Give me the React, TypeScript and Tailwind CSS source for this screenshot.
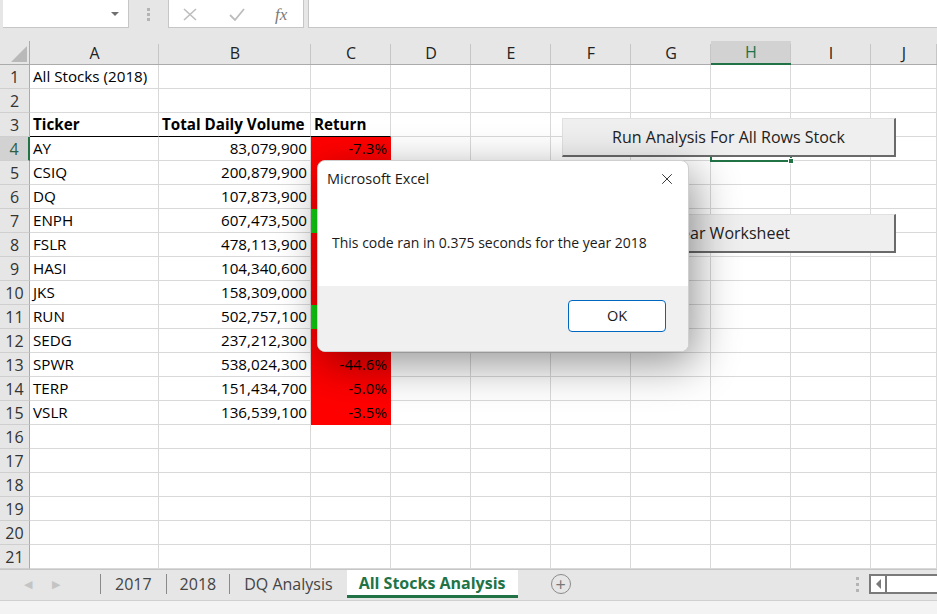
import { X } from "lucide-react";

const colWidths = [
  "w-[129px]",
  "w-[152px]",
  "w-[80px]",
  "w-[80px]",
  "w-[80px]",
  "w-[80px]",
  "w-[80px]",
  "w-[80px]",
  "w-[80px]",
  "w-[66px]",
];
const colNames = ["A", "B", "C", "D", "E", "F", "G", "H", "I", "J"];

const stocks = [
  ["AY", "83,079,900", "-7.3%"],
  ["CSIQ", "200,879,900", "-16.1%"],
  ["DQ", "107,873,900", "-62.6%"],
  ["ENPH", "607,473,500", "81.9%"],
  ["FSLR", "478,113,900", "-39.7%"],
  ["HASI", "104,340,600", "-25.5%"],
  ["JKS", "158,309,000", "-60.5%"],
  ["RUN", "502,757,100", "84.0%"],
  ["SEDG", "237,212,300", "-7.8%"],
  ["SPWR", "538,024,300", "-44.6%"],
  ["TERP", "151,434,700", "-5.0%"],
  ["VSLR", "136,539,100", "-3.5%"],
];

type Cell = { text?: string; bold?: boolean; right?: boolean; fill?: "red" | "green"; underline?: boolean };

function buildRow(r: number): Cell[] {
  const cells: Cell[] = Array.from({ length: 10 }, () => ({}));
  if (r === 1) cells[0] = { text: "All Stocks (2018)" };
  if (r === 3) {
    cells[0] = { text: "Ticker", bold: true, underline: true };
    cells[1] = { text: "Total Daily Volume", bold: true, underline: true };
    cells[2] = { text: "Return", bold: true, underline: true };
  }
  if (r >= 4 && r <= 15) {
    const [t, v, ret] = stocks[r - 4];
    cells[0] = { text: t };
    cells[1] = { text: v, right: true };
    cells[2] = { text: ret, right: true, fill: ret.startsWith("-") ? "red" : "green" };
  }
  return cells;
}

function GridCell({ cell, width }: { cell: Cell; width: string }) {
  const fill =
    cell.fill === "red"
      ? "bg-[#ff0000] border-[#ff0000]"
      : cell.fill === "green"
        ? "bg-[#11d011] border-[#11d011]"
        : "bg-white border-[#d9d9d9]";
  return (
    <div
      className={`${width} shrink-0 h-full border-r border-b ${fill} ${
        cell.underline ? "border-b-black" : ""
      } flex items-center overflow-visible whitespace-nowrap ${
        cell.right ? "justify-end pr-[3px]" : "pl-[3px]"
      } ${cell.bold ? "font-bold" : ""} text-[15.2px] text-black`}
    >
      {cell.text}
    </div>
  );
}

function FormulaBar() {
  return (
    <div className="h-[28px] flex items-stretch">
      <div className="ml-[3px] w-[126px] bg-white border-r border-b border-[#c6c6c6] flex items-center justify-end pr-[9px]">
        <div className="w-0 h-0 border-l-[4px] border-r-[4px] border-t-[4px] border-l-transparent border-r-transparent border-t-[#707070]" />
      </div>
      <div className="w-[39px] flex flex-col items-center justify-center gap-[2px]">
        <div className="w-[3px] h-[3px] bg-[#b4b4b4]" />
        <div className="w-[3px] h-[3px] bg-[#b4b4b4]" />
        <div className="w-[3px] h-[3px] bg-[#b4b4b4]" />
      </div>
      <div className="w-[136px] bg-white border-l border-r border-b border-[#c6c6c6] relative flex items-center">
        <svg className="absolute left-[14px] top-[8px]" width="14" height="13" viewBox="0 0 14 13">
          <path d="M1 1 L13 12 M13 1 L1 12" stroke="#bdbdbd" strokeWidth="1.6" fill="none" />
        </svg>
        <svg className="absolute left-[60px] top-[8px]" width="16" height="13" viewBox="0 0 16 13">
          <path d="M1 7 L6 12 L15 1" stroke="#bdbdbd" strokeWidth="1.8" fill="none" />
        </svg>
        <span className="absolute left-[106px] top-[2px] text-[17px] italic text-[#7a7a7a] font-['Liberation_Serif',serif]">
          fx
        </span>
      </div>
      <div className="w-[4px]" />
      <div className="flex-1 bg-white border-l border-b border-[#c6c6c6]" />
    </div>
  );
}

function ColumnHeaders() {
  return (
    <div className="h-[24px] flex">
      <div className="w-[30px] shrink-0 h-full border-r border-b border-[#ababab] relative">
        <svg className="absolute left-[11px] top-[5px]" width="16" height="16" viewBox="0 0 16 16">
          <path d="M16 0 L16 16 L0 16 Z" fill="#b9b9b9" />
        </svg>
      </div>
      {colNames.map((c, i) => (
        <div
          key={c}
          className={`${colWidths[i]} shrink-0 h-full flex items-center justify-center text-[16px] relative ${
            c === "H"
              ? "bg-[#d2d2d2] text-[#217346] border-b-2 border-b-[#217346]"
              : "text-[#222] border-b border-b-[#ababab]"
          }`}
        >
          {c}
          <div className="absolute right-0 top-[3px] bottom-0 w-px bg-[#c6c6c6]" />
        </div>
      ))}
    </div>
  );
}

function SheetTabs() {
  return (
    <div className="h-[31px] flex items-stretch border-t border-[#c6c6c6] bg-[#e6e6e6] pb-[2px]">
      <div className="w-[100px] flex items-center gap-[20px] pl-[24px] text-[#c4c4c4] text-[11px]">
        <span>◀</span>
        <span>▶</span>
      </div>
      <div className="flex items-center text-[16px] text-[#444]">
        <div className="w-px h-[20px] bg-[#8a8a8a]" />
        <div className="px-[14px]">2017</div>
        <div className="w-px h-[20px] bg-[#8a8a8a]" />
        <div className="px-[13px]">2018</div>
        <div className="w-px h-[20px] bg-[#8a8a8a]" />
        <div className="px-[14px]">DQ Analysis</div>
      </div>
      <div className="w-[171px] bg-white border-b-[3px] border-[#217346] flex items-center justify-center font-bold text-[16px] text-[#217346]">
        All Stocks Analysis
      </div>
      <div className="w-[86px] flex items-center justify-center">
        <div className="w-[20px] h-[20px] rounded-full border border-[#8a8a8a] flex items-center justify-center text-[#777] text-[18px] leading-none">
          +
        </div>
      </div>
      <div className="flex-1" />
      <div className="w-[14px] flex flex-col items-center justify-center gap-[3px]">
        <div className="w-[3px] h-[3px] bg-[#b4b4b4]" />
        <div className="w-[3px] h-[3px] bg-[#b4b4b4]" />
        <div className="w-[3px] h-[3px] bg-[#b4b4b4]" />
      </div>
      <div className="w-[5px]" />
      <div className="my-[4px] w-[68px] bg-white border-l-2 border-t-2 border-b-2 border-[#7a7a7a] flex">
        <div className="w-[16px] border-r-2 border-[#7a7a7a] flex items-center justify-center">
          <div className="w-0 h-0 border-t-[5px] border-b-[5px] border-r-[5px] border-t-transparent border-b-transparent border-r-[#7a7a7a]" />
        </div>
      </div>
    </div>
  );
}

export default function App() {
  const rows = Array.from({ length: 21 }, (_, i) => i + 1);
  return (
    <div className="w-[937px] h-[614px] bg-[#e6e6e6] relative overflow-hidden font-['Open_Sans',sans-serif]">
      <FormulaBar />
      <div className="h-[13px]" />
      <ColumnHeaders />
      <div className="flex flex-col">
        {rows.map((r) => (
          <div key={r} className="h-[24px] flex">
            <div
              className={`w-[30px] shrink-0 h-full flex items-center justify-center text-[16px] border-b border-[#cfcfcf] ${
                r === 4
                  ? "bg-[#d2d2d2] text-[#2f5e43] border-r-2 border-r-[#217346]"
                  : "bg-[#e6e6e6] text-[#333] border-r border-r-[#ababab]"
              }`}
            >
              {r}
            </div>
            {buildRow(r).map((cell, i) => (
              <GridCell key={i} cell={cell} width={colWidths[i]} />
            ))}
          </div>
        ))}
      </div>
      <SheetTabs />
      <div className="h-[14px] bg-[#f3f3f3] border-t border-[#d0d0d0]" />

      {/* selected cell H4 */}
      <div className="absolute left-[710px] top-[136px] w-[82px] h-[26px] border-2 border-[#217346]">
        <div className="absolute -right-[4px] -bottom-[4px] w-[6px] h-[6px] bg-[#217346] border border-white" />
      </div>

      {/* form buttons */}
      <div className="absolute left-[562px] top-[118px] w-[334px] h-[39px] bg-[#efefef] border-t border-l border-[#e0e0e0] border-r-2 border-b-2 border-r-[#6a6a6a] border-b-[#6a6a6a] flex items-center justify-center text-[16px] text-[#222]">
        Run Analysis For All Rows Stock
      </div>
      <div className="absolute left-[562px] top-[214px] w-[334px] h-[39px] bg-[#efefef] border-t border-l border-[#e0e0e0] border-r-2 border-b-2 border-r-[#6a6a6a] border-b-[#6a6a6a] flex items-center justify-center text-[16px] text-[#222]">
        Clear Worksheet
      </div>

      {/* message box */}
      <div className="absolute left-[317px] top-[160px] w-[372px] h-[192px] rounded-[8px] border border-[#cfcfcf] bg-white overflow-hidden shadow-[6px_12px_44px_rgba(0,0,0,0.42)] flex flex-col">
        <div className="h-[35px] flex items-center justify-between pl-[9px] pr-[12px]">
          <span className="text-[14.5px] text-[#1a1a1a]">Microsoft Excel</span>
          <X className="w-[18px] h-[18px] text-[#222]" strokeWidth={1.2} />
        </div>
        <div className="flex-1 flex items-center pl-[14px] text-[14px] text-[#1a1a1a] mt-[2px]">
          This code ran in 0.375 seconds for the year 2018
        </div>
        <div className="h-[65px] bg-[#f0f0f0] flex justify-end items-start pt-[14px] pr-[22px]">
          <div className="w-[98px] h-[32px] bg-white rounded-[4px] border border-[#0067c0] flex items-center justify-center text-[14.5px] text-[#1a1a1a]">
            OK
          </div>
        </div>
      </div>
    </div>
  );
}
